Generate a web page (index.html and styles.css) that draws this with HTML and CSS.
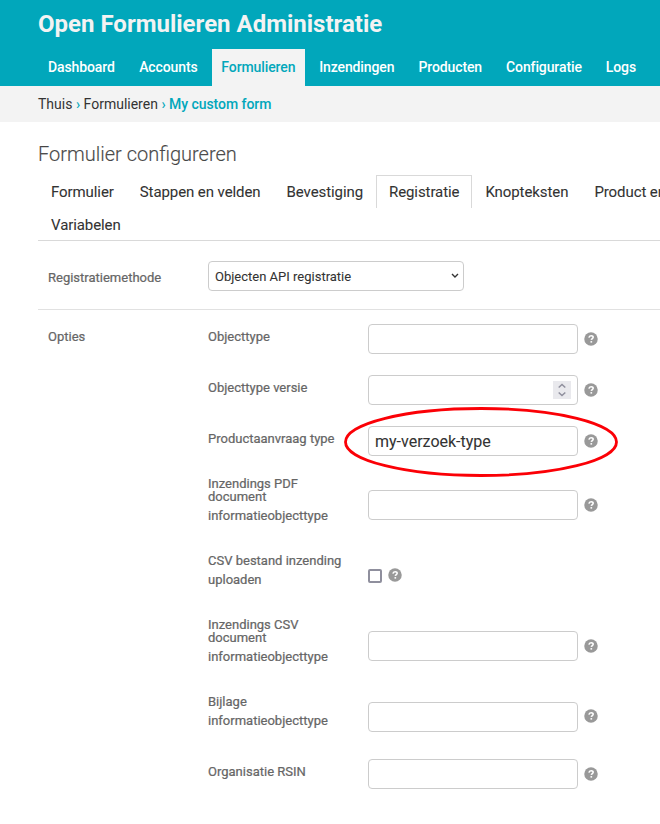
FILE: index.html
```html
<!DOCTYPE html>
<html lang="nl">
<head>
<meta charset="utf-8">
<title>Open Formulieren Administratie</title>
<link rel="stylesheet" href="styles.css">
</head>
<body>
<svg class="defs" aria-hidden="true"><symbol id="help" viewBox="-.25 -.25 13.5 13.5"><circle cx="6.5" cy="6.5" r="6.5" fill="#999"/><path d="M4.5 5.1C4.7 3.8 5.5 3.3 6.6 3.3c1.2 0 2 .6 2 1.5 0 1.3-1.7 1.3-1.8 2.6" fill="none" stroke="#fff" stroke-width="1.5"/><path d="M6 8.5h1.6v1.5H6z" fill="#fff"/></symbol></svg>
<header class="header">
  <h1 class="brand"><span>Open Formulieren Administratie</span></h1>
  <nav class="nav">
    <a>Dashboard</a><a>Accounts</a><a class="active">Formulieren</a><a>Inzendingen</a><a>Producten</a><a>Configuratie</a><a>Logs</a>
  </nav>
</header>
<div class="crumbs"><span>Thuis</span> <b>›</b> <span>Formulieren</span> <b>›</b> <b>My custom form</b></div>
<main class="content">
  <h2 class="title">Formulier configureren</h2>
  <div class="tabs">
    <a>Formulier</a><a>Stappen en velden</a><a>Bevestiging</a><a class="active">Registratie</a><a>Knopteksten</a><a class="clipped">Product en betaling</a><a>Variabelen</a>
  </div>
  <div class="method">
    <label>Registratiemethode</label>
    <div class="select"><span>Objecten API registratie</span><svg width="8" height="6" viewBox="0 0 8 6"><path d="M1 1l3 3 3-3" fill="none" stroke="#333" stroke-width="1.4"/></svg></div>
  </div>
  <div class="options">
    <div class="caption">Opties</div>
    <div class="rows">
      <div class="row"><label>Objecttype</label><div class="control"><div class="input"></div><svg class="help"><use href="#help"/></svg></div></div>
      <div class="row"><label>Objecttype versie</label><div class="control"><div class="input"><span class="spin"><svg width="10" height="14" viewBox="0 0 10 14"><path d="M1.7 4.5L5 1.5l3.3 3M1.7 9.5l3.3 3 3.3-3" fill="none" stroke="#8f8f9d" stroke-width="1.5"/></svg></span></div><svg class="help"><use href="#help"/></svg></div></div>
      <div class="row short"><label>Productaanvraag type</label><div class="control marked"><div class="input">my-verzoek-type</div><svg class="help"><use href="#help"/></svg><svg class="ring" viewBox="0 0 276 72"><ellipse cx="138" cy="36" rx="135.5" ry="33.5" fill="none" stroke="#fb0006" stroke-width="2.8"/></svg></div></div>
      <div class="row three"><label>Inzendings PDF<br>document<span>informatieobjecttype</span></label><div class="control"><div class="input"></div><svg class="help"><use href="#help"/></svg></div></div>
      <div class="row check"><label>CSV bestand inzending<span>uploaden</span></label><div class="control"><div class="box"></div><svg class="help"><use href="#help"/></svg></div></div>
      <div class="row three"><label>Inzendings CSV<br>document<span>informatieobjecttype</span></label><div class="control"><div class="input"></div><svg class="help"><use href="#help"/></svg></div></div>
      <div class="row two"><label>Bijlage<span>informatieobjecttype</span></label><div class="control"><div class="input"></div><svg class="help"><use href="#help"/></svg></div></div>
      <div class="row"><label>Organisatie RSIN</label><div class="control"><div class="input"></div><svg class="help"><use href="#help"/></svg></div></div>
    </div>
  </div>
</main>
</body>
</html>
```
FILE: styles.css
```css
* { box-sizing: border-box; }
body { margin: 0; width: 660px; height: 824px; overflow: hidden; background: #fff; color: #333; font: 400 13px/19px Roboto, "Liberation Sans", sans-serif; }
.defs { display: block; width: 0; height: 0; }
.header { height: 86px; padding-left: 38px; background: #01a7bb; color: #f3f3f3; }
.brand { margin: 0; height: 49px; padding-top: 9px; font-size: 24px; line-height: 30px; font-weight: 700; white-space: nowrap; }
.nav { display: flex; gap: 4px; height: 37px; }
.nav a { padding: 0 10px; line-height: 36px; font-size: 14px; font-weight: 500; letter-spacing: -.11px; color: #fff; white-space: nowrap; }
.nav a:first-child { padding-right: 10.4px; }
.nav a.active { background: #f3f3f3; color: #01a7bb; padding: 0 9.8px; }
.crumbs { height: 36px; padding-left: 38px; background: #f3f3f3; font-size: 14px; line-height: 36px; white-space: nowrap; }
.crumbs b { color: #01a7bb; font-weight: 500; letter-spacing: -.05px; }
.content { width: 660px; padding-left: 38px; overflow: hidden; }
.title { margin: 0; height: 53px; padding-top: 20px; font-size: 20px; line-height: 24px; font-weight: 300; color: #444; -webkit-text-stroke: .15px #666; }
.tabs { display: flex; flex-wrap: wrap; height: 66px; border-bottom: 1px solid #d9d9d9; }
.tabs a { height: 33px; padding: 0 12px; border: 1px solid transparent; border-bottom: 0; font-size: 15px; line-height: 32px; letter-spacing: -.085px; white-space: nowrap; -webkit-text-stroke: .08px; }
.tabs a.active { border-color: #d9d9d9; }
.tabs a.clipped { width: 78px; padding-right: 0; }
label, .caption { color: #666; font-weight: 400; -webkit-text-stroke: .22px; }
.method { display: grid; grid-template-columns: 160px 256px; height: 69px; padding: 20px 0 0 10px; border-bottom: 1px solid #e1e1e1; }
.method label { padding-top: 7px; }
.select { display: flex; align-items: center; justify-content: space-between; height: 30px; padding: 0 4px 0 6px; border: 1px solid #ccc; border-radius: 4px; font-size: 13px; -webkit-text-stroke: .08px; }
.options { display: grid; grid-template-columns: 160px 1fr; padding: 14px 0 0 10px; }
.caption { padding-top: 3px; }
.row { display: grid; grid-template-columns: 160px 1fr; height: 51px; align-items: start; }
.row label { padding-top: 3px; white-space: nowrap; }
.row label span { display: block; margin-top: 3px; line-height: 19px; }
.short { height: 48px; }
.three { height: 77px; }
.three label, .two label, .check label { line-height: 13px; }
.three .control { margin-top: 16px; }
.check { height: 64px; }
.check .control { height: 14px; margin-top: 18px; }
.check .help { margin-bottom: 2px; }
.two { height: 67px; }
.two .control { margin-top: 10px; }
.two .help { margin-bottom: 2px; }
.control { display: flex; align-items: center; gap: 6px; height: 30px; position: relative; }
.input { display: flex; align-items: center; width: 210px; height: 30px; padding: 0 6px; border: 1px solid #ccc; border-radius: 4px; font-size: 16px; -webkit-text-stroke: .08px; }
.help { width: 14px; height: 14px; }
.box { width: 14px; height: 14px; border: 2px solid #8f8f9d; border-radius: 2px; }
.spin { display: flex; align-items: center; justify-content: center; width: 18px; height: 18px; margin-left: auto; background: #e9e9ed; }
.ring { position: absolute; left: -25px; top: -20px; width: 276px; height: 72px; }
```
